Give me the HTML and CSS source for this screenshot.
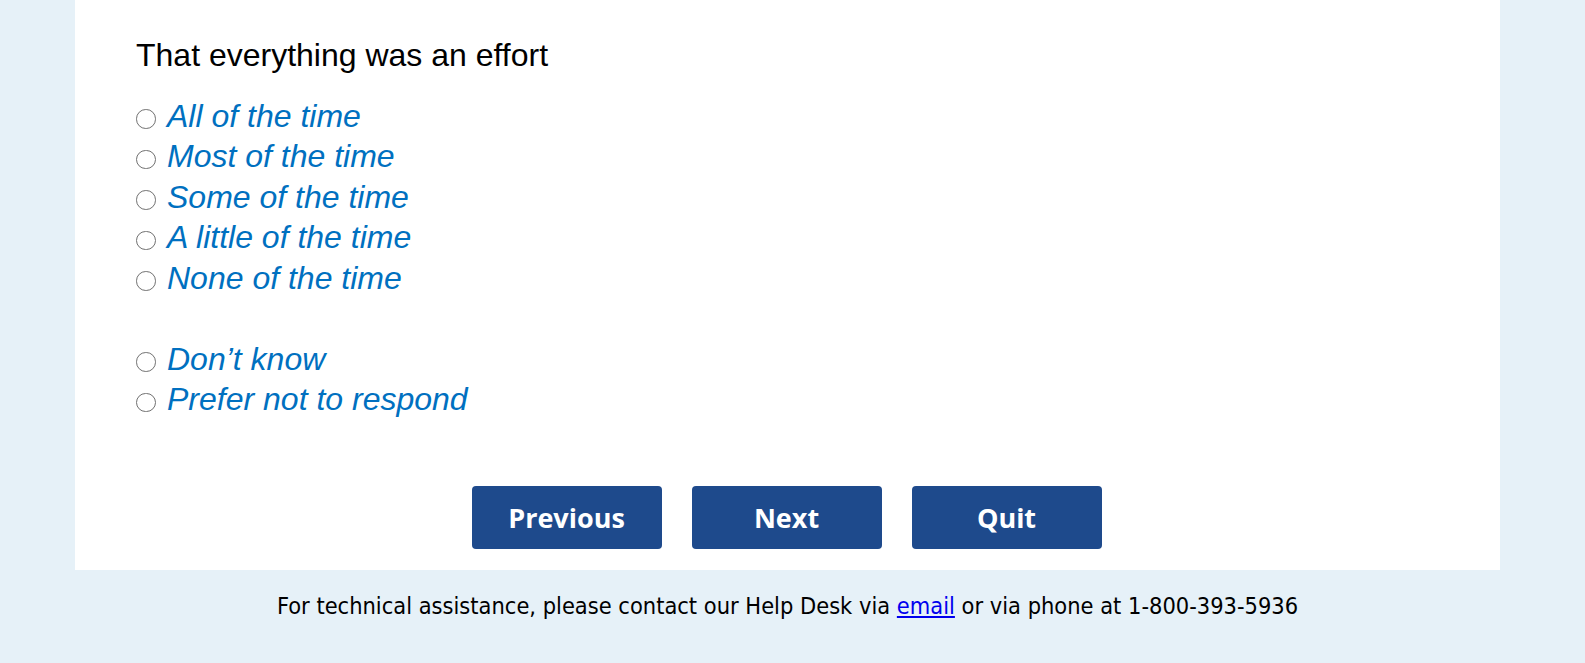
FILE: index.html
```html
<!DOCTYPE html>
<html lang="en">
<head>
<meta charset="utf-8">
<title>Survey</title>
<link rel="stylesheet" href="styles.css">
</head>
<body>
<div class="page">
  <main class="panel">
    <h1 class="question">That everything was an effort</h1>
    <div class="options">
      <label class="option"><input type="radio" name="q" class="radio"><span class="opt-text">All of the time</span></label>
      <label class="option"><input type="radio" name="q" class="radio"><span class="opt-text">Most of the time</span></label>
      <label class="option"><input type="radio" name="q" class="radio"><span class="opt-text">Some of the time</span></label>
      <label class="option"><input type="radio" name="q" class="radio"><span class="opt-text">A little of the time</span></label>
      <label class="option"><input type="radio" name="q" class="radio"><span class="opt-text">None of the time</span></label>
      <div class="option-gap"></div>
      <label class="option"><input type="radio" name="q" class="radio"><span class="opt-text">Don’t know</span></label>
      <label class="option"><input type="radio" name="q" class="radio"><span class="opt-text">Prefer not to respond</span></label>
    </div>
    <div class="actions">
      <button class="btn" type="button">Previous</button>
      <button class="btn" type="button">Next</button>
      <button class="btn" type="button">Quit</button>
    </div>
  </main>
  <footer class="footer">For technical assistance, please contact our Help Desk via <a href="#" class="footer-link">email</a> or via phone at 1-800-393-5936</footer>
</div>
</body>
</html>
```
FILE: styles.css
```css
html, body {
  margin: 0;
  padding: 0;
}

body {
  background: #e6f1f8;
  font-family: "Liberation Sans", Arial, sans-serif;
}

.page {
  width: 1425px;
  margin-left: 75px;
}

.panel {
  display: block;
  background: #ffffff;
  padding: 36.5px 61px 21px;
}

.question {
  margin: 0;
  font-family: "Liberation Sans", Arial, sans-serif;
  font-weight: normal;
  font-size: 32px;
  line-height: 37px;
  color: #000000;
}

.options {
  margin-top: 22px;
}

.option {
  display: block;
  font-size: 32px;
  line-height: 40.5px;
  height: 40.5px;
}

.option-gap {
  height: 40.5px;
}

.radio {
  -webkit-appearance: none;
  appearance: none;
  box-sizing: border-box;
  width: 19.5px;
  height: 19.5px;
  margin: 0 11.5px 0 0;
  border: 1.6px solid #707070;
  border-radius: 50%;
  background: #ffffff;
  vertical-align: -2px;
}

.opt-text {
  font-style: italic;
  color: #0070c0;
}

.actions {
  display: flex;
  justify-content: center;
  gap: 30px;
  margin-top: 66px;
  padding-right: 2px;
}

.btn {
  width: 190px;
  height: 63px;
  border: none;
  border-radius: 4px;
  background: #1e4a8c;
  color: #ffffff;
  font-family: "Open Sans", sans-serif;
  font-weight: 700;
  font-size: 27px;
  padding: 0;
}

.footer {
  padding-top: 22px;
  text-align: center;
  font-family: "DejaVu Sans Condensed", "DejaVu Sans", sans-serif;
  font-size: 23.4px;
  color: #000000;
}

.footer-link {
  color: #0000ee;
  text-decoration: underline;
}
```
